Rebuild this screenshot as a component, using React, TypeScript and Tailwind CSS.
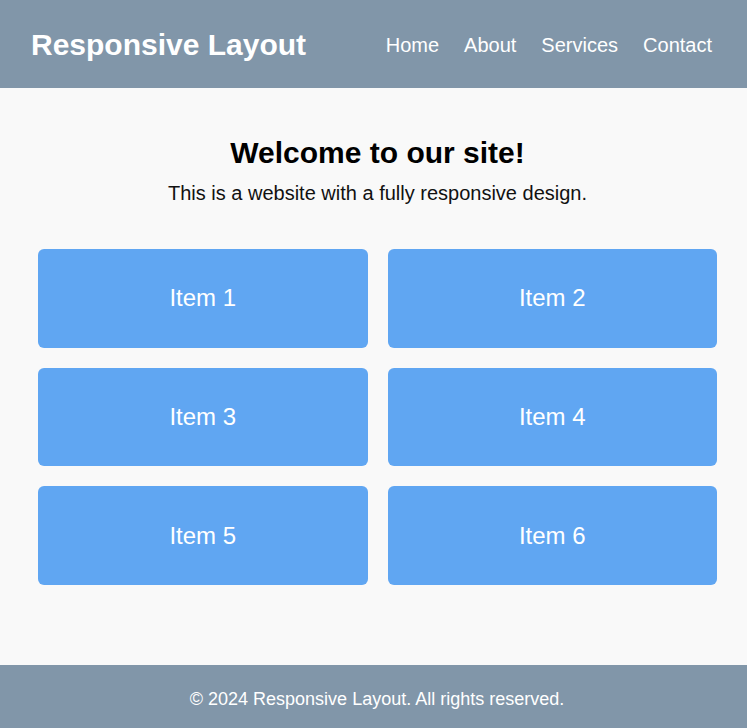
const items = ["Item 1", "Item 2", "Item 3", "Item 4", "Item 5", "Item 6"];

export default function App() {
  return (
    <div className="min-h-screen flex flex-col bg-[#f9f9f9] font-['Liberation_Sans',Arial,sans-serif]">
      <header className="h-[88px] bg-[#8196a9] flex items-center justify-between pl-[31px] pr-[35px] pt-[2px] text-white">
        <h1 className="text-[30px] font-bold leading-none">Responsive Layout</h1>
        <nav className="flex gap-[25px] text-[20px]">
          <a href="#">Home</a>
          <a href="#">About</a>
          <a href="#">Services</a>
          <a href="#">Contact</a>
        </nav>
      </header>

      <main className="flex-1 pt-[47px] pl-[38px] pr-[30px]">
        <h2 className="text-center text-[30px] font-bold leading-[36px] text-black">Welcome to our site!</h2>
        <p className="text-center text-[20px] leading-[24px] mt-[10px] text-[#111]">
          This is a website with a fully responsive design.
        </p>
        <div className="grid grid-cols-2 gap-[20px] mt-[44px]">
          {items.map((item) => (
            <div
              key={item}
              className="h-[98.7px] rounded-md bg-[#60a6f2] text-white text-[24px] flex items-center justify-center"
            >
              {item}
            </div>
          ))}
        </div>
      </main>

      <footer className="h-[63px] bg-[#8196a9] flex items-center justify-center pl-[7px] pt-[5px] text-white text-[18px]">
        © 2024 Responsive Layout. All rights reserved.
      </footer>
    </div>
  );
}
